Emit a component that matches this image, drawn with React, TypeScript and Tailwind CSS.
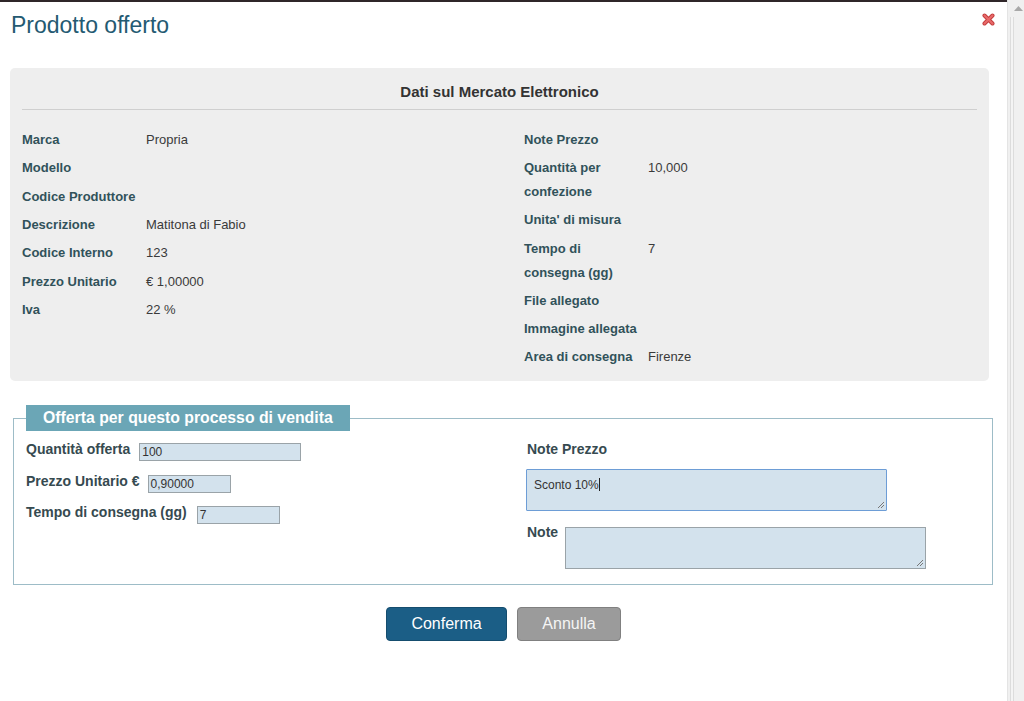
import React from "react";

const leftRows: [string, string][] = [
  ["Marca", "Propria"],
  ["Modello", ""],
  ["Codice Produttore", ""],
  ["Descrizione", "Matitona di Fabio"],
  ["Codice Interno", "123"],
  ["Prezzo Unitario", "€ 1,00000"],
  ["Iva", "22 %"],
];

const rightRows: [string, string][] = [
  ["Note Prezzo", ""],
  ["Quantità per confezione", "10,000"],
  ["Unita' di misura", ""],
  ["Tempo di consegna (gg)", "7"],
  ["File allegato", ""],
  ["Immagine allegata", ""],
  ["Area di consegna", "Firenze"],
];

function InfoRow({ label, value, left }: { label: string; value: string; left?: boolean }) {
  return (
    <div className={`flex text-[13px] leading-[24px] ${left ? "py-[2.17px]" : "py-[2.1px]"}`}>
      <div className="w-[124px] shrink-0 pr-[6px] font-bold text-[#31525a]">{label}</div>
      <div className="flex-1 text-[#3a3a3a]">{value}</div>
    </div>
  );
}

function CloseIcon() {
  return (
    <svg width="13" height="13" viewBox="0 0 13 13">
      <path d="M2.5 2.5 L10.5 10.5 M10.5 2.5 L2.5 10.5" stroke="#c23b3b" strokeWidth="4" strokeLinecap="round" />
      <path d="M2.5 2.5 L10.5 10.5 M10.5 2.5 L2.5 10.5" stroke="#e86a6a" strokeWidth="2.2" strokeLinecap="round" />
    </svg>
  );
}

export default function App() {
  return (
    <div
      className="flex h-[701px] w-[1024px] overflow-hidden bg-white"
      style={{ fontFamily: '"Liberation Sans", Arial, sans-serif' }}
    >
      <div className="flex w-[1007px] flex-col border-t-2 border-[#2f2629]">
        {/* Title row */}
        <div className="flex items-start justify-between pt-[10px] pl-[11px] pr-[12px]">
          <h1 className="text-[23px] leading-[26px] text-[#245a72]">Prodotto offerto</h1>
          <div className="mt-[1px]">
            <CloseIcon />
          </div>
        </div>

        {/* Gray info panel */}
        <div className="mt-[30px] ml-[10px] w-[979px] rounded-[5px] bg-[#eeeeee] pt-[14px] pb-[10px]">
          <div className="mx-[12px] border-b border-[#cfcfcf] pb-[7px] text-center text-[15px] font-bold leading-[20px] text-[#333333]">
            Dati sul Mercato Elettronico
          </div>
          <div className="mt-[16px] flex px-[12px]">
            <div className="w-[502px]">
              {leftRows.map(([l, v]) => (
                <InfoRow key={l} label={l} value={v} left />
              ))}
            </div>
            <div className="flex-1">
              {rightRows.map(([l, v]) => (
                <InfoRow key={l} label={l} value={v} />
              ))}
            </div>
          </div>
        </div>

        {/* Offer fieldset */}
        <fieldset className="mt-[24px] ml-[13px] w-[980px] border border-[#9dbcc7] px-[12px] pb-[15px]">
          <legend className="h-[26px] bg-[#6ba6b6] px-[17px] text-[15.8px] font-bold leading-[26px] text-white">
            Offerta per questo processo di vendita
          </legend>
          <div className="flex pt-[9px]">
            <div className="w-[501px] shrink-0 text-[14px] font-bold text-[#364a50]">
              <div className="flex items-start gap-[9px]">
                <span className="leading-[18px]">Quantità offerta</span>
                <div className="mt-[3px] h-[18px] w-[162px] border border-[#9aa3a8] bg-[#d3e2ed] px-[2px] text-[12px] font-normal leading-[16px] text-[#333]">
                  100
                </div>
              </div>
              <div className="mt-[11px] flex items-start gap-[8px]">
                <span className="leading-[18px]">Prezzo Unitario €</span>
                <div className="mt-[3px] h-[18px] w-[83px] border border-[#9aa3a8] bg-[#d3e2ed] px-[2px] text-[12px] font-normal leading-[16px] text-[#333]">
                  0,90000
                </div>
              </div>
              <div className="mt-[10px] flex items-start gap-[10px]">
                <span className="leading-[18px]">Tempo di consegna (gg)</span>
                <div className="mt-[3px] h-[18px] w-[83px] border border-[#9aa3a8] bg-[#d3e2ed] px-[2px] text-[12px] font-normal leading-[16px] text-[#333]">
                  7
                </div>
              </div>
            </div>
            <div className="flex-1 text-[14px] font-bold text-[#364a50]">
              <div className="leading-[18px]">Note Prezzo</div>
              <div className="relative mt-[11px] -ml-[1px] h-[42px] w-[361px] rounded-[1px] border border-[#6d9dd6] bg-[#d3e2ed] px-[7px] pt-[6px] text-[12px] font-normal leading-[16px] text-[#333]">
                Sconto 10%<span className="inline-block h-[13px] w-px translate-y-[2px] bg-[#222]" />
                <svg className="absolute right-[1px] bottom-[1px]" width="8" height="8" viewBox="0 0 8 8">
                  <path d="M7 1 L1 7 M7 4 L4 7" stroke="#777" strokeWidth="1" />
                </svg>
              </div>
              <div className="mt-[12px] flex items-start gap-[7px]">
                <span className="leading-[18px]">Note</span>
                <div className="relative mt-[4px] h-[42px] w-[361px] border border-[#9aa3a8] bg-[#d3e2ed]">
                  <svg className="absolute right-[1px] bottom-[1px]" width="8" height="8" viewBox="0 0 8 8">
                    <path d="M7 1 L1 7 M7 4 L4 7" stroke="#777" strokeWidth="1" />
                  </svg>
                </div>
              </div>
            </div>
          </div>
        </fieldset>

        {/* Buttons */}
        <div className="mt-[22px] flex justify-center gap-[10px]">
          <button className="h-[34px] w-[121px] rounded-[4px] border border-[#154d6e] bg-[#1b5e86] text-[16px] leading-[32px] text-white">
            Conferma
          </button>
          <button className="h-[34px] w-[104px] rounded-[4px] border border-[#808080] bg-[#9b9b9b] text-[16px] leading-[32px] text-[#f5f5f5]">
            Annulla
          </button>
        </div>
      </div>

      {/* Scrollbar */}
      <div className="relative flex w-[17px] flex-col border-l border-[#e4e4e4] bg-[#f0f0f0]">
        <div className="flex h-[17px] items-center justify-center pl-[4px]">
          <svg width="9" height="5" viewBox="0 0 9 5">
            <path d="M0 5 L4.5 0 L9 5 Z" fill="#a8a8a8" />
          </svg>
        </div>
        <div className="ml-[2px] flex-1 w-[4px] border-x border-[#dcdcdc] bg-[#f4f4f4]" />
      </div>
    </div>
  );
}
